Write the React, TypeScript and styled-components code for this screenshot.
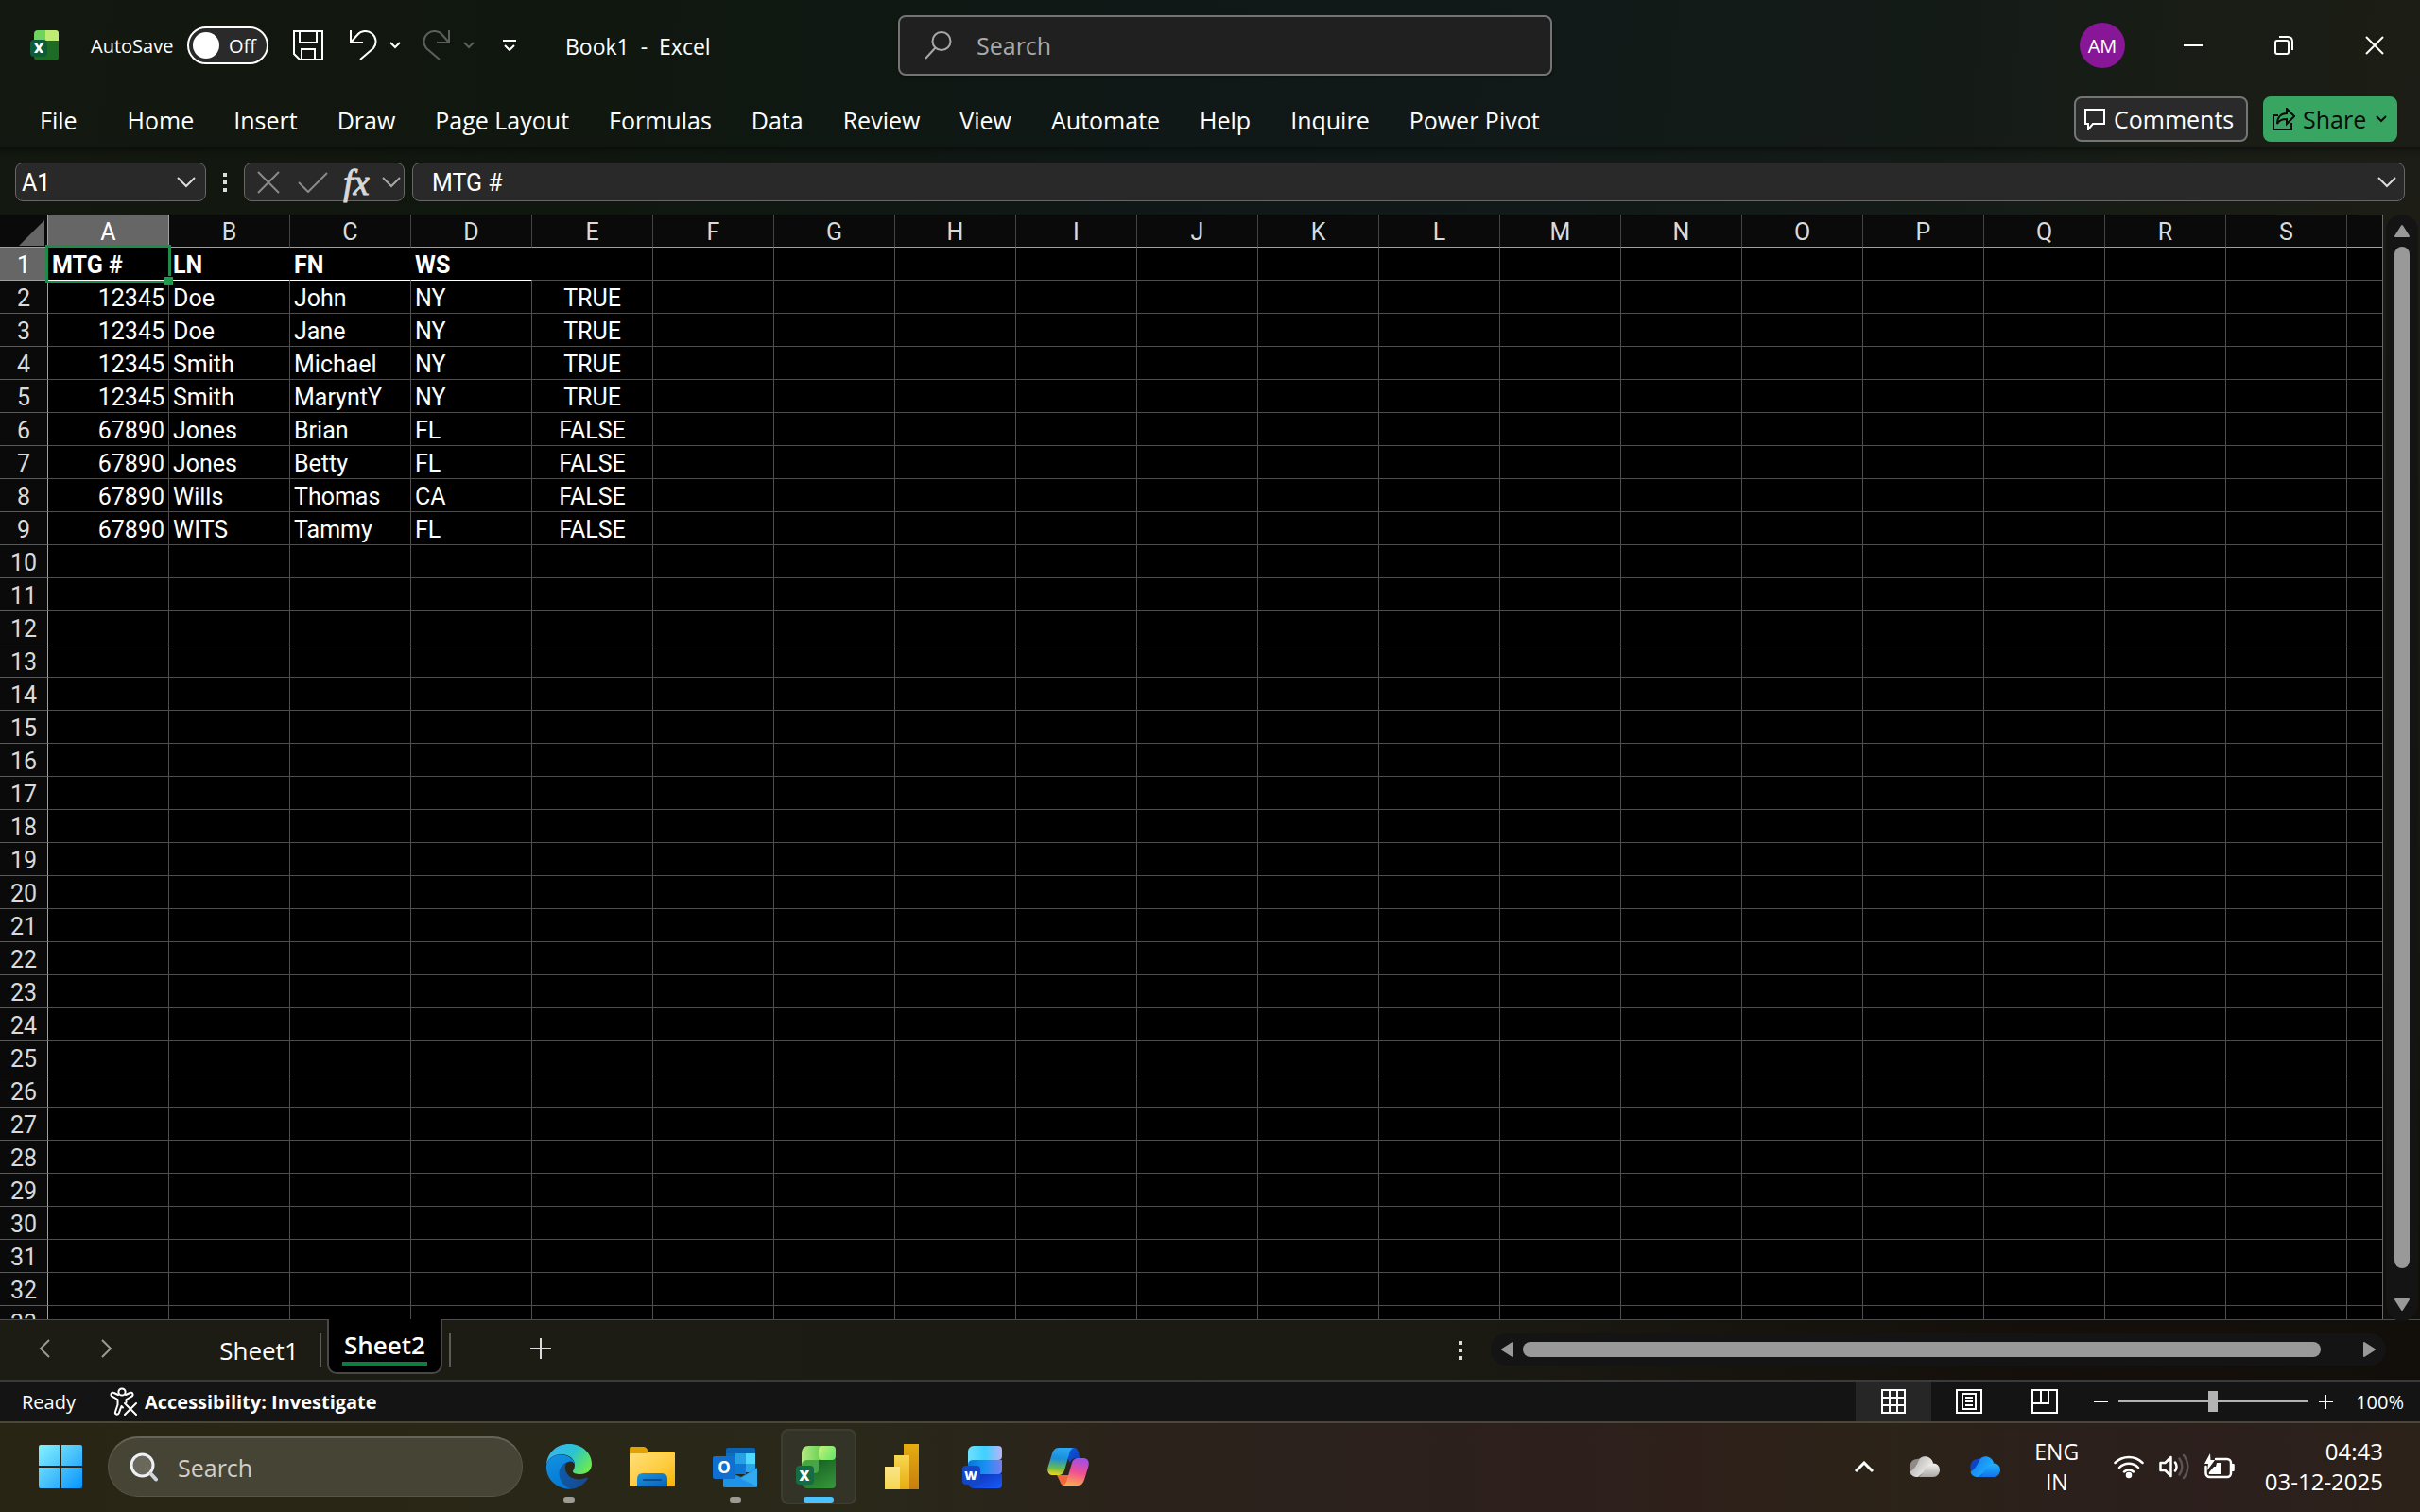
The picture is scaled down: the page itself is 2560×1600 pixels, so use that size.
import React from "react";
import styled, { createGlobalStyle, css } from "styled-components";

const ui = `"Open Sans", "Noto Sans", sans-serif`;
const sheetFont = `Roboto, "Liberation Sans", sans-serif`;

const GlobalStyle = createGlobalStyle`
  *, *::before, *::after { box-sizing: border-box; }
  body { margin: 0; background: #000; color: #fff; font-family: ${ui}; }
  button, input { font: inherit; color: inherit; margin: 0; }
  button { background: none; border: 0; padding: 0; cursor: default; }
  svg { display: block; flex: none; }
`;

const Window = styled.div`
  display: flex;
  flex-direction: column;
  height: 100vh;
  overflow: hidden;
`;

const Chrome = styled.header`
  flex: none;
  background: linear-gradient(
    95deg,
    #131810 0%,
    #10170f 24%,
    #0f1816 46%,
    #111a18 64%,
    #141b17 80%,
    #191d15 92%,
    #1d1d16 100%
  );
`;

/* ---------- title bar ---------- */

const TitleBar = styled.div`
  display: grid;
  grid-template-columns: minmax(0, 1fr) minmax(0, 692px) minmax(0, 1fr);
  align-items: center;
  height: 96px;
  padding-left: 32px;
`;

const QuickAccess = styled.div`
  display: flex;
  align-items: center;
`;

const AutoSave = styled.label`
  display: flex;
  align-items: center;
  justify-content: space-between;
  width: 188px;
  margin: 0 18px 0 32px;
  font-size: 20px;
`;

const SwitchInput = styled.input`
  position: absolute;
  opacity: 0;
  pointer-events: none;
`;

const Switch = styled.span`
  display: flex;
  align-items: center;
  gap: 10px;
  width: 86px;
  height: 40px;
  padding-left: 4px;
  border: 2px solid #fff;
  border-radius: 20px;
  background: #2b2a2b;
  &::before {
    content: "";
    width: 28px;
    height: 28px;
    border-radius: 50%;
    background: #fff;
  }
`;

const ToolButton = styled.button<{ $w: number; $dim?: boolean }>`
  display: flex;
  align-items: center;
  justify-content: center;
  flex: none;
  width: ${(p) => p.$w}px;
  height: 48px;
  color: ${(p) => (p.$dim ? "#5c5f5b" : "#fff")};
`;

const ToolGroup = styled.div`
  display: flex;
  margin-left: 10px;
`;

const DocumentTitle = styled.div`
  margin-left: 36px;
  padding-top: 2px;
  font-size: 23px;
  white-space: pre;
`;

const SearchBox = styled.label`
  display: flex;
  align-items: center;
  height: 64px;
  gap: 26px;
  padding: 0 26px;
  border: 2px solid #757575;
  border-radius: 8px;
  background: #202020;
  color: #a9a9a9;
  box-shadow: 0 2px 3px rgba(0, 0, 0, 0.4);
`;

const BareInput = styled.input`
  flex: 1;
  min-width: 0;
  height: 100%;
  padding: 0;
  border: 0;
  outline: 0;
  background: none;
  &::placeholder {
    color: inherit;
    opacity: 1;
  }
`;

const SearchInput = styled(BareInput)`
  font-size: 25px;
`;

const WindowControls = styled.div`
  display: flex;
  align-items: center;
  justify-content: flex-end;
`;

const Avatar = styled.button`
  width: 48px;
  height: 48px;
  margin-right: 24px;
  border-radius: 50%;
  background: #881798;
  font-size: 20px;
`;

/* ---------- ribbon tabs ---------- */

const Ribbon = styled.div`
  display: flex;
  align-items: center;
  height: 60px;
  padding: 0 24px 0 21px;
`;

const Tabs = styled.nav`
  display: flex;
  flex: 1;
`;

const Tab = styled.button`
  padding: 2px 21px 0;
  height: 60px;
  font-size: 25px;
  white-space: nowrap;
  &:first-child {
    padding-right: 32px;
  }
`;

const RibbonAction = styled.button<{ $w: number; $primary?: boolean }>`
  display: flex;
  align-items: center;
  gap: 8px;
  width: ${(p) => p.$w}px;
  height: 48px;
  margin-left: 16px;
  padding: 0 0 0 8px;
  border-radius: 8px;
  border: 2px solid ${(p) => (p.$primary ? "#38a563" : "#757575")};
  background: ${(p) => (p.$primary ? "#38a563" : "#2a2a2a")};
  color: ${(p) => (p.$primary ? "#0b0b0b" : "#fff")};
  font-size: 25px;
`;

/* ---------- formula bar ---------- */

const FormulaBar = styled.div`
  display: flex;
  align-items: center;
  padding: 16px 16px 14px;
  background: linear-gradient(rgba(0, 0, 0, 0.4), rgba(0, 0, 0, 0.1) 5px, transparent 12px);
`;

const Field = styled.div<{ $grow?: boolean; $w?: number }>`
  display: flex;
  align-items: center;
  flex: ${(p) => (p.$grow ? "1 1 0" : "none")};
  width: ${(p) => (p.$w ? `${p.$w}px` : "auto")};
  height: 41px;
  border: 1px solid #666;
  border-radius: 8px;
  background: #292929;
  & + & {
    margin-left: 8px;
  }
`;

const FieldInput = styled(BareInput)<{ $pad: number }>`
  padding: 2px 0 0 ${(p) => p.$pad}px;
  font-family: ${sheetFont};
  font-size: 25px;
`;

const FieldButton = styled.button<{ $w: number; $tone: string }>`
  display: flex;
  align-items: center;
  justify-content: center;
  width: ${(p) => p.$w}px;
  height: 100%;
  color: ${(p) => p.$tone};
`;

const FxLabel = styled.span`
  font-family: "Liberation Serif", serif;
  font-style: italic;
  font-size: 38px;
  line-height: 36px;
  -webkit-text-stroke: 1px currentColor;
`;

const Grip = styled.span<{ $w: number }>`
  display: flex;
  flex-direction: column;
  align-items: center;
  gap: 4px;
  width: ${(p) => p.$w}px;
  &::before,
  &::after,
  & > i {
    content: "";
    width: 4px;
    height: 4px;
    background: #dcdcdc;
  }
`;

/* ---------- worksheet ---------- */

const Workspace = styled.main`
  display: flex;
  flex: 1;
  min-height: 0;
  background: linear-gradient(#1d1d16, #17160f 60%, #120e0a);
`;

const GridFrame = styled.div`
  flex: 1;
  min-width: 0;
  overflow: hidden;
  background: #000;
  border-right: 1px solid #6a6a6a;
`;

const Sheet = styled.table`
  table-layout: fixed;
  width: 0;
  border-spacing: 0;
  border-collapse: separate;
  font-family: ${sheetFont};
  font-size: 25px;
  line-height: 30px;
`;

const headCell = css`
  height: 35px;
  padding: 4px 0 0;
  font-weight: 400;
  text-align: center;
  color: #dadada;
  background: #0a0a0a;
`;

const Corner = styled.td`
  ${headCell}
  border-right: 1px solid #a0a0a0;
  border-bottom: 1px solid #a0a0a0;
  & > svg {
    margin-left: 20px;
  }
`;

const ColHead = styled.th<{ $on: boolean }>`
  ${headCell}
  border-right: 1px solid ${(p) => (p.$on ? "#a0a0a0" : "#444")};
  border-bottom: 1px solid #a0a0a0;
  ${(p) => p.$on && "background: #666; color: #fff;"}
`;

const RowHead = styled.th<{ $on: boolean }>`
  ${headCell}
  border-right: 1px solid #a0a0a0;
  border-bottom: 1px solid ${(p) => (p.$on ? "#a0a0a0" : "#5a5a5a")};
  ${(p) => p.$on && "background: #666; color: #fff;"}
`;

const Cell = styled.td<{ $align: string; $bold: boolean; $ruled: boolean }>`
  position: relative;
  height: 35px;
  padding: 4px 4px 0;
  text-align: ${(p) => p.$align};
  font-weight: ${(p) => (p.$bold ? 700 : 400)};
  white-space: nowrap;
  border-right: 1px solid ${(p) => (p.$ruled ? "#000" : "#4e4e4e")};
  border-bottom: 1px solid ${(p) => (p.$ruled ? "#fff" : "#4e4e4e")};
`;

const Selection = styled.span`
  position: absolute;
  z-index: 1;
  inset: -3px -3px -4px -3px;
  border: 3px solid #1f8a4c;
  &::after {
    content: "";
    position: absolute;
    right: -5px;
    bottom: -5px;
    width: 9px;
    height: 9px;
    background: #1f9a4c;
    box-shadow: -1px -1px 0 #000;
  }
`;

const VerticalScroll = styled.div`
  position: relative;
  display: flex;
  flex-direction: column;
  align-items: center;
  width: 34px;
  margin: 0 2px -2px 3px;
  border-radius: 17px;
  background: #141414;
`;

const HorizontalScroll = styled.div`
  display: flex;
  align-items: center;
  width: 37vw;
  height: 34px;
  margin-bottom: 2px;
  border-radius: 17px;
  background: #141414;
`;

const ArrowButton = styled.button`
  display: flex;
  align-items: center;
  justify-content: center;
  flex: none;
  width: 34px;
  height: 34px;
  color: #999;
`;

const Track = styled.div`
  flex: 1;
  display: flex;
  align-self: stretch;
`;

const Thumb = styled.div<{ $vertical?: boolean }>`
  margin: ${(p) => (p.$vertical ? "0 auto" : "auto 0")};
  width: ${(p) => (p.$vertical ? "16px" : "96%")};
  height: ${(p) => (p.$vertical ? "98%" : "16px")};
  border-radius: 8px;
  background: #999;
`;

/* ---------- sheet tabs ---------- */

const SheetBar = styled.div`
  display: flex;
  align-items: center;
  flex: none;
  height: 64px;
  padding: 0 36px 0 14px;
  border-top: 1px solid #4e4e4e;
  background: linear-gradient(90deg, #1c1c14 0%, #1b1b13 58%, #17140e 72%, #140f0a 84%, #120e0a 100%);
`;

const SheetNav = styled.button<{ $w: number; $tone?: string }>`
  display: flex;
  align-items: center;
  justify-content: center;
  width: ${(p) => p.$w}px;
  height: 60px;
  padding-bottom: 4px;
  color: ${(p) => p.$tone || "#9a9a94"};
`;

const SheetList = styled.div`
  display: flex;
  align-items: center;
  align-self: stretch;
  margin-left: 64px;
`;

const SheetTab = styled.button`
  width: 128px;
  height: 100%;
  font-size: 26px;
`;

const Divider = styled.span`
  width: 2px;
  height: 36px;
  background: #5c5c56;
`;

const ActiveSheetTab = styled.button`
  align-self: flex-start;
  width: 122px;
  height: 58px;
  margin: -1px 7px 0 6px;
  padding: 0 14px 5px;
  border: 2px solid #484848;
  border-top: 0;
  border-radius: 0 0 10px 10px;
  background: #000;
  font-size: 26px;
  font-weight: 600;
  line-height: 36px;
`;

const ActiveUnderline = styled.span`
  display: block;
  border-bottom: 4px solid #107c41;
  padding-top: 6px;
`;

const Spacer = styled.span`
  flex: 1;
`;

/* ---------- status bar ---------- */

const StatusBar = styled.div`
  display: flex;
  align-items: center;
  flex: none;
  height: 46px;
  padding: 0 17px 0 23px;
  border-top: 2px solid #3a3a3a;
  border-bottom: 2px solid #4a463c;
  background: #141414;
  font-size: 20px;
`;

const Accessibility = styled.button`
  display: flex;
  align-items: center;
  gap: 7px;
  margin-left: 36px;
  font-weight: 700;
`;

const ViewButton = styled.button<{ $on?: boolean }>`
  display: flex;
  align-items: center;
  justify-content: center;
  width: 80px;
  height: 42px;
  background: ${(p) => (p.$on ? "#262626" : "transparent")};
`;

const ZoomStep = styled.button`
  display: flex;
  align-items: center;
  justify-content: center;
  width: 38px;
  height: 42px;
`;

const ZoomSlider = styled.input`
  appearance: none;
  width: 200px;
  height: 22px;
  background: linear-gradient(#b3b3b3, #b3b3b3) center / 100% 2px no-repeat;
  &::-webkit-slider-thumb {
    appearance: none;
    width: 10px;
    height: 22px;
    background: #b3b3b3;
  }
`;

const ZoomValue = styled.button`
  margin-left: 13px;
`;

/* ---------- taskbar ---------- */

const Taskbar = styled.footer`
  display: flex;
  align-items: center;
  flex: none;
  height: 94px;
  padding: 0 23px 2px 24px;
  background: linear-gradient(
    90deg,
    #292514 0%,
    #292717 20%,
    #292819 36%,
    #2b231b 46%,
    #2c201d 60%,
    #2e1f1a 70%,
    #2c2318 77%,
    #2b201b 85%,
    #2c1f1d 91%,
    #2b2219 100%
  );
`;

const StartButton = styled.button`
  display: flex;
  align-items: center;
  justify-content: center;
  width: 80px;
  height: 80px;
`;

const TaskSearch = styled.label`
  display: flex;
  align-items: center;
  width: 439px;
  height: 64px;
  gap: 20px;
  margin: 0 9px 0 10px;
  padding: 0 22px;
  border: 1px solid #57554a;
  border-top: 2px solid #66645a;
  border-radius: 32px;
  background: #464435;
  color: #d0cfc9;
`;

const Apps = styled.div`
  display: flex;
  gap: 8px;
`;

const AppButton = styled.button<{ $active?: boolean; $mark?: boolean }>`
  position: relative;
  display: flex;
  align-items: center;
  justify-content: center;
  width: 80px;
  height: 80px;
  border-radius: 8px;
  border: 2px solid ${(p) => (p.$active ? "#3e3d32" : "transparent")};
  background: ${(p) => (p.$active ? "#343328" : "transparent")};
  &::after {
    content: "";
    display: ${(p) => (p.$active || p.$mark ? "block" : "none")};
    position: absolute;
    bottom: 0;
    width: ${(p) => (p.$active ? 32 : 12)}px;
    height: 6px;
    border-radius: 3px;
    background: ${(p) => (p.$active ? "#4cc2ff" : "#9d9b93")};
  }
`;

const TrayButton = styled.button<{ $w: number }>`
  display: flex;
  align-items: center;
  justify-content: center;
  gap: 16px;
  width: ${(p) => p.$w}px;
  height: 80px;
  font-size: 23px;
  line-height: 32px;
`;

const Clock = styled.button`
  padding: 0 16px;
  height: 80px;
  font-size: 24px;
  line-height: 32px;
  text-align: right;
`;

/* ---------- icons ---------- */

type LineProps = { w: number; h: number; d: string; sw?: number };

const Line = ({ w, h, d, sw = 2 }: LineProps) => (
  <svg
    width={w}
    height={h}
    viewBox={`0 0 ${w} ${h}`}
    fill="none"
    stroke="currentColor"
    strokeWidth={sw}
    aria-hidden="true"
  >
    <path d={d} />
  </svg>
);

const Triangle = ({ w, h, d }: LineProps) => (
  <svg width={w} height={h} viewBox={`0 0 ${w} ${h}`} aria-hidden="true">
    <path d={d} fill="currentColor" stroke="currentColor" strokeWidth="2" strokeLinejoin="round" />
  </svg>
);

const ExcelSmall = () => (
  <svg width="32" height="32" viewBox="0 0 32 32" aria-hidden="true">
    <path d="M4 10h26v19a3 3 0 0 1-3 3H8a4 4 0 0 1-4-4z" fill="#1e6b25" />
    <path d="M8 0h8v11H4V4a4 4 0 0 1 4-4z" fill="#6fd35f" />
    <path d="M16 0h11a3 3 0 0 1 3 3v8H16z" fill="#bdeb73" />
    <rect x="0" y="10" width="18" height="18" rx="4" fill="#0f5a38" />
    <text x="9" y="24" textAnchor="middle" fontFamily="Open Sans, sans-serif" fontWeight="800" fontSize="14" fill="#fff">
      X
    </text>
  </svg>
);

const AccessibilityIcon = () => (
  <svg width="30" height="30" viewBox="0 0 30 30" fill="none" stroke="#fff" strokeWidth="2" strokeLinecap="round" strokeLinejoin="round" aria-hidden="true">
    <circle cx="13" cy="5" r="3.6" />
    <path d="M9 8 4.500 6a2 2 0 0 0-2 3.600L8.500 13v5.500L6 26a2 2 0 0 0 3.800 1.300L12.500 20l1.500 1.500M17 8l4.500-2a2 2 0 0 1 2 3.600L17.500 13v3" />
    <path d="m16 17 12 12M28 17 16 29" />
  </svg>
);

const WindowsLogo = () => (
  <svg width="46" height="46" viewBox="0 0 46 46" aria-hidden="true">
    <defs>
      <linearGradient id="win" gradientUnits="userSpaceOnUse" x1="0" y1="0" x2="46" y2="46">
        <stop offset="0" stopColor="#83f3ff" />
        <stop offset="0.5" stopColor="#4bc3fb" />
        <stop offset="1" stopColor="#0594ff" />
      </linearGradient>
    </defs>
    <path d="M2 0h20v22H0V2a2 2 0 0 1 2-2zM24 0h20a2 2 0 0 1 2 2v20H24zM0 24h22v22H2a2 2 0 0 1-2-2zM24 24h22v20a2 2 0 0 1-2 2H24z" fill="url(#win)" />
  </svg>
);

const TaskSearchIcon = () => (
  <svg width="31" height="31" viewBox="0 0 31 31" aria-hidden="true">
    <circle cx="13.500" cy="13.500" r="11.500" fill="#6a685b" stroke="#edf0f4" strokeWidth="3" />
    <path d="m22.500 22.500 5.500 6" stroke="#cfd6de" strokeWidth="4" strokeLinecap="round" />
  </svg>
);

const EdgeIcon = () => (
  <svg width="48" height="48" viewBox="0 0 48 48" aria-hidden="true">
    <defs>
      <linearGradient id="edgeTop" x1="0" y1="0.2" x2="1" y2="0.7">
        <stop offset="0" stopColor="#38b6f5" />
        <stop offset="0.5" stopColor="#2bc3d2" />
        <stop offset="0.8" stopColor="#52dc7c" />
        <stop offset="1" stopColor="#6fe94f" />
      </linearGradient>
      <linearGradient id="edgeLeft" x1="0.2" y1="0" x2="0.5" y2="1">
        <stop offset="0" stopColor="#1490df" />
        <stop offset="1" stopColor="#0078d7" />
      </linearGradient>
      <linearGradient id="edgeDark" x1="0" y1="0" x2="1" y2="0.5">
        <stop offset="0" stopColor="#0e5cab" />
        <stop offset="1" stopColor="#164b92" />
      </linearGradient>
    </defs>
    <path d="M0 22C1 9 11 0 24 0c14 0 24 10 24 21 0 7-5 11-12 11-5 0-8-1-8-3 0-1 2-3 2-7 0-6-6-11-14-11C8 11 2 15 0 22z" fill="url(#edgeTop)" />
    <path d="M0 23c1-7 8-11.500 15-11.500 8 0 15 5 15 10.500-1-3-4-4.500-7-3-5 2-9 8-8 15s6 12 12 13.500C14 49-1 39 0 23z" fill="url(#edgeLeft)" />
    <path d="M22 19c-5 2-9 7-8.500 13C14 40 20 46.500 27 47.600c7-.6 13-5 16.500-10.600.5-1-.3-1.600-1.200-1.200-9 4-20 1-22.300-8.800-.7-3 0-6 2-8z" fill="url(#edgeDark)" />
  </svg>
);

const FolderIcon = () => (
  <svg width="48" height="48" viewBox="0 0 48 48" aria-hidden="true">
    <defs>
      <linearGradient id="fold" x1="0" y1="0" x2="1" y2="1">
        <stop offset="0" stopColor="#ffe07c" />
        <stop offset="0.6" stopColor="#ffcb3c" />
        <stop offset="1" stopColor="#f5b204" />
      </linearGradient>
      <linearGradient id="foldBlue" x1="0" y1="0" x2="1" y2="1">
        <stop offset="0" stopColor="#1d93dc" />
        <stop offset="1" stopColor="#0a62b8" />
      </linearGradient>
    </defs>
    <path d="M0 5a2 2 0 0 1 2-2h13q2 0 3 1.500L20 8h26a2 2 0 0 1 2 2v8H0z" fill="#e2a204" />
    <path d="M0 11q0-1 1-1h16q2 0 3-1.500h26a2 2 0 0 1 2 2V44a1 1 0 0 1-1 1H1a1 1 0 0 1-1-1z" fill="url(#fold)" />
    <path d="M8 45V37q0-6 6-6h20q6 0 6 6v8z" fill="url(#foldBlue)" />
    <path d="M15 38h18" stroke="#0a4a8f" strokeWidth="2" strokeLinecap="round" />
  </svg>
);

const OutlookIcon = () => (
  <svg width="48" height="48" viewBox="0 0 48 48" aria-hidden="true">
    <path d="M14 6q0-2 2-2h27q2 0 2 2v24H14z" fill="#0a63b5" />
    <path d="M14 10h11v12H14z" fill="#0f6cbd" />
    <path d="M24 10h11v11H24z" fill="#28a0e6" />
    <path d="M35 10h10v11H35z" fill="#50d9ff" />
    <path d="M24 21h11v11H24z" fill="#0f78d4" />
    <path d="M35 21h10v9H35z" fill="#28a8ea" />
    <path d="m11 27 19 8 17-10v19q0 2-2 2H13q-2 0-2-2z" fill="#1a8ce0" />
    <path d="m13 46 34-20v18q0 2-2 2z" fill="#33a9f0" />
    <path d="m11 28 36 17q-1 1-2 1H13q-2 0-2-2z" fill="#1f93e8" />
    <rect x="0" y="13" width="24" height="24" rx="2" fill="#0f70cf" />
    <text x="12" y="31" textAnchor="middle" fontFamily="Open Sans, sans-serif" fontWeight="700" fontSize="17" fill="#fff">
      O
    </text>
  </svg>
);

const ExcelIcon = () => (
  <svg width="48" height="48" viewBox="0 0 48 48" aria-hidden="true">
    <defs>
      <linearGradient id="xlA" x1="0" y1="0" x2="1" y2="0">
        <stop offset="0" stopColor="#b6ea82" />
        <stop offset="0.5" stopColor="#77d75f" />
        <stop offset="1" stopColor="#5fc84f" />
      </linearGradient>
      <linearGradient id="xlB" x1="0" y1="0" x2="1" y2="0.6">
        <stop offset="0" stopColor="#c9f07a" />
        <stop offset="1" stopColor="#6ee76a" />
      </linearGradient>
      <linearGradient id="xlC" x1="0.2" y1="0" x2="0.8" y2="1">
        <stop offset="0" stopColor="#145a20" />
        <stop offset="1" stopColor="#34943a" />
      </linearGradient>
    </defs>
    <path d="M6 16h36v27a4 4 0 0 1-4 4H12a6 6 0 0 1-6-6z" fill="url(#xlC)" />
    <path d="M6 14h18v13a4 4 0 0 1-4 4H6z" fill="#46a544" />
    <path d="M6 9a7 7 0 0 1 7-7h25v15H12q-6 0-6 6z" fill="url(#xlA)" />
    <path d="M24 6a4 4 0 0 1 4-4h10a4 4 0 0 1 4 4v7a4 4 0 0 1-4 4H28a4 4 0 0 1-4-4z" fill="url(#xlB)" />
    <rect x="0" y="23" width="19" height="20" rx="4" fill="#146c43" />
    <text x="9" y="39" textAnchor="middle" fontFamily="Open Sans, sans-serif" fontWeight="800" fontSize="15" fill="#fff">
      X
    </text>
  </svg>
);

const PowerBiIcon = () => (
  <svg width="36" height="48" viewBox="0 0 36 48" aria-hidden="true">
    <defs>
      <linearGradient id="pb1" x1="0" y1="0" x2="0" y2="1">
        <stop offset="0" stopColor="#e6ad10" />
        <stop offset="1" stopColor="#c87e0e" />
      </linearGradient>
      <linearGradient id="pb2" x1="0" y1="0" x2="0" y2="1">
        <stop offset="0" stopColor="#f6d751" />
        <stop offset="1" stopColor="#e6ad10" />
      </linearGradient>
      <linearGradient id="pb3" x1="0" y1="0" x2="0" y2="1">
        <stop offset="0" stopColor="#f9e589" />
        <stop offset="1" stopColor="#f6d751" />
      </linearGradient>
    </defs>
    <path d="M20 0h16v48H20z" fill="url(#pb1)" />
    <path d="M10 12h16v36H10z" fill="url(#pb2)" />
    <path d="M0 24h16v24H0z" fill="url(#pb3)" />
  </svg>
);

const WordIcon = () => (
  <svg width="48" height="48" viewBox="0 0 48 48" aria-hidden="true">
    <defs>
      <linearGradient id="wdA" x1="0" y1="0" x2="1" y2="0">
        <stop offset="0" stopColor="#6fe0ff" />
        <stop offset="0.5" stopColor="#3fd0ff" />
        <stop offset="1" stopColor="#b9b4f8" />
      </linearGradient>
      <linearGradient id="wdB" x1="0" y1="0" x2="1" y2="0">
        <stop offset="0" stopColor="#0a74d8" />
        <stop offset="0.5" stopColor="#1790f2" />
        <stop offset="1" stopColor="#7a7cf0" />
      </linearGradient>
      <linearGradient id="wdC" x1="0" y1="0" x2="1" y2="1">
        <stop offset="0" stopColor="#0a2fae" />
        <stop offset="1" stopColor="#1a5cff" />
      </linearGradient>
    </defs>
    <path d="M6 32h36v11a4 4 0 0 1-4 4H12a6 6 0 0 1-6-6z" fill="url(#wdC)" />
    <path d="M6 17h36v11a4 4 0 0 1-4 4H6z" fill="url(#wdB)" />
    <path d="M6 8a6 6 0 0 1 6-6h26a4 4 0 0 1 4 4v7a4 4 0 0 1-4 4H12q-6 0-6 5z" fill="url(#wdA)" />
    <rect x="0" y="23" width="19" height="20" rx="4" fill="#1547c4" />
    <text x="9" y="38" textAnchor="middle" fontFamily="Open Sans, sans-serif" fontWeight="800" fontSize="13" fill="#fff">
      W
    </text>
  </svg>
);

const CopilotIcon = () => (
  <svg width="44" height="40" viewBox="0 0 44 40" aria-hidden="true">
    <defs>
      <linearGradient id="cpA" x1="0.4" y1="0" x2="0.3" y2="1">
        <stop offset="0" stopColor="#2aa6f2" />
        <stop offset="0.4" stopColor="#1c8fd8" />
        <stop offset="0.75" stopColor="#6cbb4d" />
        <stop offset="1" stopColor="#f2d31b" />
      </linearGradient>
      <linearGradient id="cpB" x1="0.6" y1="0" x2="0.4" y2="1">
        <stop offset="0" stopColor="#a04fe8" />
        <stop offset="0.5" stopColor="#ee4f95" />
        <stop offset="1" stopColor="#ffa84c" />
      </linearGradient>
      <linearGradient id="cpC" x1="0" y1="0" x2="1" y2="1">
        <stop offset="0" stopColor="#0a5be0" />
        <stop offset="1" stopColor="#1236b8" />
      </linearGradient>
    </defs>
    <path d="M22 0h6c3 0 4 2 5 5l2 6h-4c-4 0-6 2-7 5l-4-8z" fill="url(#cpC)" />
    <path d="M10 29h12l4 11H18c-3 0-4-2-5-5z" fill="#f4663c" />
    <path d="M24 0H12C8 0 6 3 5 6L1 19c-2 6 0 10 5 10h5c4 0 6-2 7-5l5-17c1-4 2-6 5-6.500z" fill="url(#cpA)" />
    <path d="M20 40h12c4 0 6-3 7-6l4-13c2-6 0-10-5-10h-5c-4 0-6 2-7 5l-5 17c-1 4-2 6-5 6.500z" fill="url(#cpB)" />
  </svg>
);

const CloudIcon = ({ id, a, b, c }: { id: string; a: string; b: string; c: string }) => (
  <svg width="32" height="22" viewBox="0 0 32 22" aria-hidden="true">
    <defs>
      <linearGradient id={id} x1="0" y1="0" x2="1" y2="0.6">
        <stop offset="0" stopColor={c} />
        <stop offset="1" stopColor={b} />
      </linearGradient>
      <linearGradient id={`${id}Front`} x1="0.6" y1="0" x2="0.6" y2="1">
        <stop offset="0" stopColor={b} />
        <stop offset="1" stopColor={c} />
      </linearGradient>
    </defs>
    <path d="M1 15C-1 9 2 3 8 3l5-1 3 8-9 11c-3 0-5-2-6-6z" fill={a} />
    <path d="M10 4c3-6 13-5 15 3l-3 4L9 22c-5 0-8-2-8.500-6C4 15 7 11 10 4z" fill={`url(#${id})`} />
    <path d="M9 22c6-2 7-13 15-14.500 5-.5 8 3 8 7s-3 7.500-7 7.500z" fill={`url(#${id}Front)`} />
  </svg>
);

const WifiIcon = () => (
  <svg width="32" height="28" viewBox="0 0 32 28" fill="none" stroke="#fff" strokeWidth="2.500" strokeLinecap="round" aria-hidden="true">
    <path d="M1.500 10a20.500 20.500 0 0 1 29 0M6 15a14 14 0 0 1 20 0M11 19.500a7.500 7.500 0 0 1 10 0" />
    <circle cx="16" cy="23" r="2" fill="#fff" />
  </svg>
);

const SoundIcon = () => (
  <svg width="32" height="28" viewBox="0 0 32 28" fill="none" stroke="#fff" strokeWidth="2.500" strokeLinecap="round" strokeLinejoin="round" aria-hidden="true">
    <path d="M1.500 10v8h5l6 6V4l-6 6zM17 9.500a8 8 0 0 1 0 9" />
    <path d="M21.500 5.500a14 14 0 0 1 0 17M26 2a19 19 0 0 1 0 24" stroke="#5b5452" />
  </svg>
);

const BatteryIcon = () => (
  <svg width="32" height="28" viewBox="0 0 32 28" aria-hidden="true">
    <path d="M12 6h12a4 4 0 0 1 4 4v11a4 4 0 0 1-4 4H5.500a4 4 0 0 1-4-4V14" fill="none" stroke="#fff" strokeWidth="2.500" strokeLinecap="round" />
    <path d="M29 11.500h2.200v7H29z" fill="#fff" stroke="#fff" />
    <path d="M13 10h5v12H6q-2 0-1-2l5-6h2z" fill="#fff" />
    <path d="M6 0 0 11h4l-1 7 8-11H6.500z" fill="#fff" />
  </svg>
);

/* ---------- data ---------- */

const tabs = ["File", "Home", "Insert", "Draw", "Page Layout", "Formulas", "Data", "Review", "View", "Automate", "Help", "Inquire", "Power Pivot"];
const columns = "ABCDEFGHIJKLMNOPQRST".split("");
const rows = Array.from({ length: 33 }, (_, i) => i + 1);

const data: string[][] = [
  ["MTG #", "LN", "FN", "WS"],
  ["12345", "Doe", "John", "NY", "TRUE"],
  ["12345", "Doe", "Jane", "NY", "TRUE"],
  ["12345", "Smith", "Michael", "NY", "TRUE"],
  ["12345", "Smith", "MaryntY", "NY", "TRUE"],
  ["67890", "Jones", "Brian", "FL", "FALSE"],
  ["67890", "Jones", "Betty", "FL", "FALSE"],
  ["67890", "Wills", "Thomas", "CA", "FALSE"],
  ["67890", "WITS", "Tammy", "FL", "FALSE"],
];

const alignOf = (row: number, col: number) => {
  if (col === 4) return "center";
  return col === 0 && row > 0 ? "right" : "left";
};

const Worksheet = () => (
  <Sheet>
    <colgroup>
      <col style={{ width: 51 }} />
      {columns.map((c) => (
        <col key={c} style={{ width: 128 }} />
      ))}
    </colgroup>
    <thead>
      <tr>
        <Corner>
          <svg width="27" height="27" viewBox="0 0 27 27" aria-hidden="true">
            <path d="M27 0v27H0z" fill="#666" />
          </svg>
        </Corner>
        {columns.map((c, i) => (
          <ColHead key={c} scope="col" $on={i === 0}>
            {c === "T" ? null : c}
          </ColHead>
        ))}
      </tr>
    </thead>
    <tbody>
      {rows.map((n, r) => (
        <tr key={n}>
          <RowHead scope="row" $on={r === 0}>
            {n}
          </RowHead>
          {columns.map((c, i) => (
            <Cell key={c} $align={alignOf(r, i)} $bold={r === 0} $ruled={r === 0 && i < 4}>
              {data[r]?.[i]}
              {r === 0 && i === 0 && <Selection />}
            </Cell>
          ))}
        </tr>
      ))}
    </tbody>
  </Sheet>
);

export default function App() {
  return (
    <Window>
      <GlobalStyle />
      <Chrome>
        <TitleBar>
          <QuickAccess>
            <ExcelSmall />
            <AutoSave>
              AutoSave
              <SwitchInput type="checkbox" role="switch" />
              <Switch>Off</Switch>
            </AutoSave>
            <ToolButton $w={48} aria-label="Save">
              <Line w={32} h={32} d="M1 1h30v30H7l-6-6zM7 1v12h18V1M9 31V20h14v11" />
            </ToolButton>
            <ToolGroup>
              <ToolButton $w={48} aria-label="Undo">
                <Line w={30} h={32} d="M2 0v13h13M2 13 9 5a11 11 0 0 1 17 14L12 31" />
              </ToolButton>
              <ToolButton $w={20} aria-label="Undo history">
                <Line w={12} h={8} d="m1 1 5 5 5-5" />
              </ToolButton>
            </ToolGroup>
            <ToolGroup>
              <ToolButton $w={48} $dim aria-label="Redo">
                <Line w={30} h={32} d="M28 0v13H15M28 13 21 5A11 11 0 0 0 4 19l14 12" />
              </ToolButton>
              <ToolButton $w={20} $dim aria-label="Redo history">
                <Line w={12} h={8} d="m1 1 5 5 5-5" />
              </ToolButton>
            </ToolGroup>
            <ToolGroup>
              <ToolButton $w={46} aria-label="Customize Quick Access Toolbar">
                <Line w={14} h={12} d="M0 1h14M2 6l5 5 5-5" />
              </ToolButton>
            </ToolGroup>
            <DocumentTitle>{"Book1  -  Excel"}</DocumentTitle>
          </QuickAccess>
          <SearchBox>
            <Line w={29} h={30} d="M18 1a9 9 0 1 1 0 19 9 9 0 0 1 0-19M12 17 1 29" />
            <SearchInput type="text" placeholder="Search" aria-label="Search" />
          </SearchBox>
          <WindowControls>
            <Avatar>AM</Avatar>
            <ToolButton $w={96} aria-label="Minimize">
              <Line w={20} h={2} d="M0 1h20" />
            </ToolButton>
            <ToolButton $w={96} aria-label="Restore">
              <Line w={20} h={20} d="M3 5h10q2 0 2 2v10q0 2-2 2H3q-2 0-2-2V7q0-2 2-2zM5 1h9q5 0 5 5v9" />
            </ToolButton>
            <ToolButton $w={96} aria-label="Close">
              <Line w={20} h={20} d="m1 1 18 18M19 1 1 19" />
            </ToolButton>
          </WindowControls>
        </TitleBar>
        <Ribbon>
          <Tabs>
            {tabs.map((t) => (
              <Tab key={t}>{t}</Tab>
            ))}
          </Tabs>
          <RibbonAction $w={184}>
            <Line w={24} h={24} d="M2 2h20v15H10l-5 6v-6H2z" />
            Comments
          </RibbonAction>
          <RibbonAction $w={142} $primary>
            <Line w={24} h={24} d="M6 8H1v15h19v-7M15 1l8 8-8 8v-5c-5 0-8 1-10 5 0-7 4-11 10-11z" />
            Share
            <Line w={16} h={8} d="m3 1 5 5 5-5" />
          </RibbonAction>
        </Ribbon>
        <FormulaBar>
          <Field $w={202}>
            <FieldInput $pad={6} type="text" aria-label="Name Box" defaultValue="A1" />
            <FieldButton $w={40} $tone="#dcdcdc" aria-label="Name Box list">
              <Line w={20} h={12} d="m1 1 9 9 9-9" />
            </FieldButton>
          </Field>
          <Grip $w={40}>
            <i />
          </Grip>
          <Field $w={170}>
            <FieldButton $w={49} $tone="#8a8a8a" aria-label="Cancel">
              <Line w={24} h={24} d="m1 1 22 22M23 1 1 23" />
            </FieldButton>
            <FieldButton $w={46} $tone="#8a8a8a" aria-label="Enter">
              <Line w={32} h={22} d="m1 11 10 10L31 1" />
            </FieldButton>
            <FieldButton $w={46} $tone="#d8d8d8" aria-label="Insert Function">
              <FxLabel>fx</FxLabel>
            </FieldButton>
            <FieldButton $w={27} $tone="#a8a8a8" aria-label="Function list">
              <Line w={20} h={12} d="m1 1 9 9 9-9" />
            </FieldButton>
          </Field>
          <Field $grow>
            <FieldInput $pad={20} type="text" aria-label="Formula Bar" defaultValue="MTG #" />
            <FieldButton $w={36} $tone="#dcdcdc" aria-label="Expand Formula Bar">
              <Line w={20} h={12} d="m1 1 9 9 9-9" />
            </FieldButton>
          </Field>
        </FormulaBar>
      </Chrome>

      <Workspace>
        <GridFrame>
          <Worksheet />
        </GridFrame>
        <VerticalScroll>
          <ArrowButton aria-label="Scroll up">
            <Triangle w={18} h={14} d="M9 2 2 13h14z" />
          </ArrowButton>
          <Track>
            <Thumb $vertical />
          </Track>
          <ArrowButton aria-label="Scroll down">
            <Triangle w={18} h={14} d="M9 12 2 1h14z" />
          </ArrowButton>
        </VerticalScroll>
      </Workspace>

      <SheetBar>
        <SheetNav $w={66} aria-label="Previous sheet">
          <Line w={12} h={20} d="m11 1-9 9 9 9" />
        </SheetNav>
        <SheetNav $w={66} aria-label="Next sheet">
          <Line w={12} h={20} d="m1 1 9 9-9 9" />
        </SheetNav>
        <SheetList>
          <SheetTab>Sheet1</SheetTab>
          <Divider />
          <ActiveSheetTab>
            <ActiveUnderline>Sheet2</ActiveUnderline>
          </ActiveSheetTab>
          <Divider />
        </SheetList>
        <SheetNav $w={190} $tone="#dcdcdc" aria-label="New sheet">
          <Line w={22} h={22} d="M11 0v22M0 11h22" />
        </SheetNav>
        <Spacer />
        <Grip $w={64}>
          <i />
        </Grip>
        <HorizontalScroll>
          <ArrowButton aria-label="Scroll left">
            <Triangle w={14} h={18} d="M2 9 13 2v14z" />
          </ArrowButton>
          <Track>
            <Thumb />
          </Track>
          <ArrowButton aria-label="Scroll right">
            <Triangle w={14} h={18} d="M12 9 1 2v14z" />
          </ArrowButton>
        </HorizontalScroll>
      </SheetBar>

      <StatusBar>
        <span>Ready</span>
        <Accessibility>
          <AccessibilityIcon />
          Accessibility: Investigate
        </Accessibility>
        <Spacer />
        <ViewButton $on aria-label="Normal">
          <Line w={26} h={26} d="M1 1h24v24H1zM1 9h24M1 17h24M9 1v24M17 1v24" />
        </ViewButton>
        <ViewButton aria-label="Page Layout">
          <Line w={28} h={26} d="M1 1h26v24H1zM7 5h14v16H7zM10 9h8M10 13h8M10 17h8" />
        </ViewButton>
        <ViewButton aria-label="Page Break Preview">
          <Line w={28} h={26} d="M1 1h26v24H1zM10 1v14M1 15h17V1" />
        </ViewButton>
        <ZoomStep aria-label="Zoom out">
          <Line w={15} h={1} sw={1} d="M0 .5h15" />
        </ZoomStep>
        <ZoomSlider type="range" min={0} max={100} defaultValue={50} aria-label="Zoom" />
        <ZoomStep aria-label="Zoom in">
          <Line w={15} h={15} sw={1} d="M0 7.500h15M7.500 0v15" />
        </ZoomStep>
        <ZoomValue>100%</ZoomValue>
      </StatusBar>

      <Taskbar>
        <StartButton aria-label="Start">
          <WindowsLogo />
        </StartButton>
        <TaskSearch>
          <TaskSearchIcon />
          <SearchInput type="text" placeholder="Search" aria-label="Search Windows" />
        </TaskSearch>
        <Apps>
          <AppButton $mark aria-label="Microsoft Edge">
            <EdgeIcon />
          </AppButton>
          <AppButton aria-label="File Explorer">
            <FolderIcon />
          </AppButton>
          <AppButton $mark aria-label="Outlook">
            <OutlookIcon />
          </AppButton>
          <AppButton $active aria-label="Excel">
            <ExcelIcon />
          </AppButton>
          <AppButton aria-label="Power BI">
            <PowerBiIcon />
          </AppButton>
          <AppButton aria-label="Word">
            <WordIcon />
          </AppButton>
          <AppButton aria-label="Copilot">
            <CopilotIcon />
          </AppButton>
        </Apps>
        <Spacer />
        <TrayButton $w={64} aria-label="Show hidden icons">
          <Line w={22} h={13} d="m2 11 9-9 9 9" sw={3} />
        </TrayButton>
        <TrayButton $w={64} aria-label="OneDrive">
          <CloudIcon id="cloudGrey" a="#8e8b88" b="#f4f3f1" c="#aaa7a3" />
        </TrayButton>
        <TrayButton $w={64} aria-label="OneDrive for work">
          <CloudIcon id="cloudBlue" a="#0b45c4" b="#22b4fb" c="#1273f0" />
        </TrayButton>
        <TrayButton $w={88}>
          ENG
          <br />
          IN
        </TrayButton>
        <TrayButton $w={160} aria-label="Network, volume and battery">
          <WifiIcon />
          <SoundIcon />
          <BatteryIcon />
        </TrayButton>
        <Clock>
          04:43
          <br />
          03-12-2025
        </Clock>
      </Taskbar>
    </Window>
  );
}
